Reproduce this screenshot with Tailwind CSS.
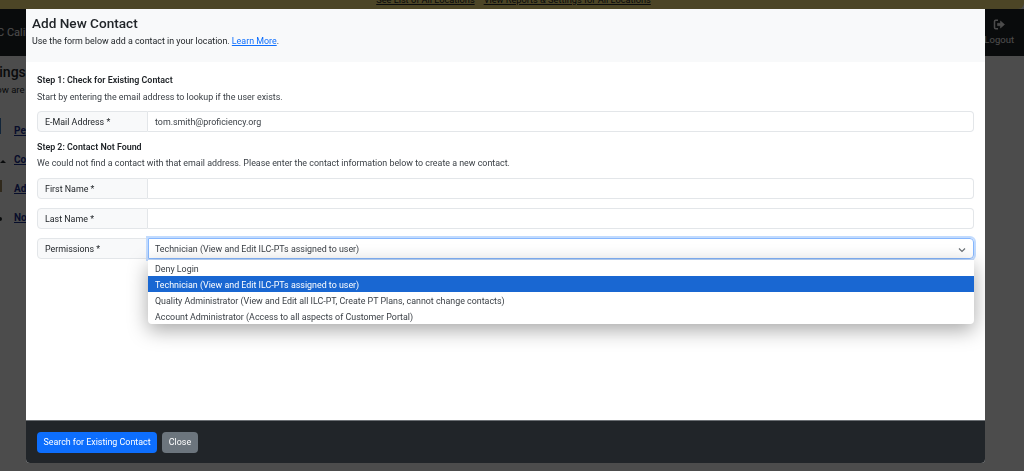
<!DOCTYPE html>
<html lang="en">
<head>
    <meta charset="UTF-8">
    <title>Add New Contact</title>
    <script src="https://cdn.jsdelivr.net/npm/@tailwindcss/browser@4"></script>
</head>
<body class="h-[471px] overflow-hidden bg-white font-['Roboto',sans-serif] text-[#212529]">
    <!-- page behind the modal -->
    <div class="h-[9px] overflow-hidden rounded-br-[6px] bg-[#ffe67f] text-[9.2px] leading-[0px]">
        <div class="flex justify-center gap-[9px] pl-[3px] underline">
            <span>See List of All Locations</span>
            <span>View Reports &amp; Settings for All Locations</span>
        </div>
    </div>
    <div class="flex h-[47px] items-center justify-between bg-[#212529] text-[9.5px] text-white">
        <span class="-ml-[6px] pt-[2px] text-[11px]">IC Calibration</span>
        <div class="mr-[10px] flex flex-col items-center pt-[2px]">
            <svg class="h-[11px] w-[13px]" viewBox="0 0 12 11" fill="none" stroke="currentColor" stroke-width="1.5">
                <path d="M4.5 1.2H2.2Q1 1.2 1 2.4V8.6Q1 9.8 2.2 9.8H4.5"/>
                <path d="M4 4.3H7V2L11 5.5 7 9V6.7H4Z" fill="currentColor" stroke-width="0.6"/>
            </svg>
            <span class="mt-[3px]">Logout</span>
        </div>
    </div>
    <div class="pt-[7px]">
        <h2 class="-ml-[26px] text-[14px] leading-[18px] font-medium">Settings</h2>
        <p class="-ml-[17px] mt-[2px] text-[9.5px] leading-[14px]">Below are the</p>
        <ul class="mt-[26px] flex flex-col gap-[13px] pl-[14px] text-[10px] leading-[16px] font-bold text-[#1a2f8f] underline">
            <li class="relative">Permissions<span class="absolute top-[-5px] left-[-14px] h-[16px] w-[1px] bg-[#3f7cc0]"></span></li>
            <li class="relative">Contacts<span class="absolute top-[8px] left-[-14px] h-0 w-0 border-x-[3px] border-b-[3px] border-x-transparent border-b-[#212529]"></span></li>
            <li class="relative">Address<span class="absolute top-[-1px] left-[-14px] h-[12px] w-[2px] bg-[#a08a60]"></span></li>
            <li class="relative">Notes<span class="absolute top-[7px] left-[-14px] h-[4px] w-[2px] rounded-r-full bg-[#212529]"></span></li>
        </ul>
    </div>

    <!-- backdrop -->
    <div class="fixed inset-0 bg-black/70"></div>

    <!-- modal -->
    <div class="fixed top-[9px] left-[26px] flex h-[454px] w-[959px] flex-col overflow-hidden rounded-b-[4px] bg-white">
        <div class="h-[53px] shrink-0 bg-[#f8f9fa] px-[6px] pt-[5px]">
            <h5 class="text-[13.6px] leading-[18px] font-medium">Add New Contact</h5>
            <p class="mt-[3px] text-[8.9px] leading-[13px]">Use the form below add a contact in your location. <a class="text-[#0d6efd] underline">Learn More</a>.</p>
        </div>

        <div class="flex-1 px-[11px] pt-[11px] text-[8.9px]">
            <p class="leading-[14px] font-semibold">Step 1: Check for Existing Contact</p>
            <p class="mt-[3px] leading-[14px] text-[#3b4046]">Start by entering the email address to lookup if the user exists.</p>
            <div class="mt-[7px] flex h-[21px]">
                <label class="flex w-[111px] items-center rounded-l-[4px] border border-[#e3e6e9] bg-[#f8f9fa] pt-[2px] pl-[7px]">E-Mail Address *</label>
                <div class="flex flex-1 items-center rounded-r-[4px] border border-l-0 border-[#e3e6e9] pt-[2px] pl-[7px] text-[#3b4046]">tom.smith@proficiency.org</div>
            </div>

            <p class="mt-[8px] leading-[14px] font-semibold">Step 2: Contact Not Found</p>
            <p class="mt-[2px] leading-[14px] text-[#3b4046]">We could not find a contact with that email address. Please enter the contact information below to create a new contact.</p>
            <div class="mt-[8px] flex h-[21px]">
                <label class="flex w-[111px] items-center rounded-l-[4px] border border-[#e3e6e9] bg-[#f8f9fa] pt-[2px] pl-[7px]">First Name *</label>
                <div class="flex-1 rounded-r-[4px] border border-l-0 border-[#e3e6e9]"></div>
            </div>
            <div class="mt-[9px] flex h-[21px]">
                <label class="flex w-[111px] items-center rounded-l-[4px] border border-[#e3e6e9] bg-[#f8f9fa] pt-[2px] pl-[7px]">Last Name *</label>
                <div class="flex-1 rounded-r-[4px] border border-l-0 border-[#e3e6e9]"></div>
            </div>
            <div class="relative mt-[9px] flex h-[21px]">
                <label class="flex w-[111px] items-center rounded-l-[4px] border border-[#e3e6e9] bg-[#f8f9fa] pt-[2px] pl-[7px]">Permissions *</label>
                <div class="flex flex-1 items-center justify-between rounded-r-[4px] border border-[#86b7fe] pt-[2px] pr-[7px] pl-[6px] text-[#3b4046] shadow-[0_0_0_2px_#c2dbfe]">
                    <span>Technician (View and Edit ILC-PTs assigned to user)</span>
                    <svg class="h-[6px] w-[8px]" viewBox="0 0 8 6" fill="none" stroke="#6b7075" stroke-width="1.2">
                        <path d="M1 1.5L4 4.5 7 1.5"/>
                    </svg>
                </div>
                <ul class="absolute top-[22px] right-0 left-[111px] overflow-hidden rounded-b-[4px] bg-white leading-[18px] text-[#3b4046] shadow-[0_6px_20px_rgba(0,0,0,0.35)]">
                    <li class="h-[16px] pl-[7px]">Deny Login</li>
                    <li class="h-[16px] bg-[#1967d2] pl-[7px] text-white">Technician (View and Edit ILC-PTs assigned to user)</li>
                    <li class="h-[16px] pl-[7px]">Quality Administrator (View and Edit all ILC-PT, Create PT Plans, cannot change contacts)</li>
                    <li class="h-[16px] pl-[7px]">Account Administrator (Access to all aspects of Customer Portal)</li>
                </ul>
            </div>
        </div>

        <div class="flex h-[43px] shrink-0 items-center gap-[5px] border-t border-[#6b6f73] bg-[#212529] px-[11px] text-[8.9px] text-white">
            <button class="h-[21px] w-[120px] rounded-[4px] bg-[#0d6efd] pt-[2px]">Search for Existing Contact</button>
            <button class="h-[21px] w-[36px] rounded-[4px] bg-[#6c757d] pt-[2px]">Close</button>
        </div>
    </div>
</body>
</html>
